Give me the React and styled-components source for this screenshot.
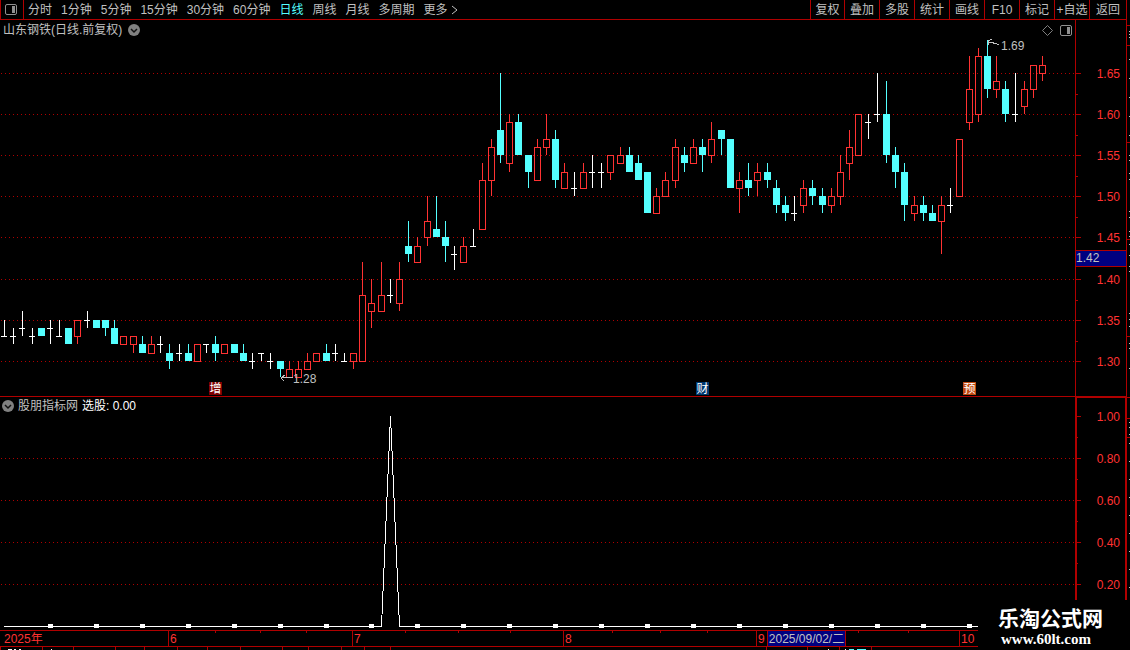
import { useState } from "react";
import styled, { createGlobalStyle } from "styled-components";

const GlobalStyle = createGlobalStyle`
  :root {
    --line: #b00000;
    --red: #ff3232;
    --cyan: #54ffff;
    --grey: #c0c0c0;
    --navy: #000080;
  }

  * {
    box-sizing: border-box;
  }

  body {
    margin: 0;
    background-color: #000;
    color: var(--grey);
    font-family: "Liberation Sans", "Noto Sans CJK SC", sans-serif;
    font-size: 12px;
    line-height: 16px;
  }

  button {
    padding: 0;
    border: none;
    background: none;
    color: inherit;
    font: inherit;
    cursor: pointer;
  }

  svg {
    display: block;
  }
`;

const Page = styled.div`
  position: relative;
  display: grid;
  grid-template-columns: minmax(0, 1fr) 3px;
  overflow: hidden;
`;

const Terminal = styled.main`
  border-right: 1px solid var(--line);
`;

const Toolbar = styled.nav`
  display: flex;
  justify-content: space-between;
  height: 20px;
  border-bottom: 1px solid var(--line);
  white-space: nowrap;
`;

const Periods = styled.div`
  display: flex;
  align-items: center;
  gap: 9px;
`;

const LayoutButton = styled.button`
  display: flex;
  align-items: center;
  width: 24px;
  height: 19px;
  margin-right: -5px;
  padding-left: 4px;
  border-left: 1px solid var(--line);
  border-right: 1px solid var(--line);
`;

const PeriodButton = styled.button`
  display: flex;
  align-items: center;
  gap: 3px;
  color: ${(props) => (props.$active ? "var(--cyan)" : "var(--grey)")};
`;

const Tools = styled.div`
  display: flex;
`;

const ToolButton = styled.button`
  width: 35px;
  border-left: 1px solid var(--line);

  &:first-child {
    width: 34px;
  }

  &:last-child {
    width: 37px;
  }
`;

const Panel = styled.section`
  display: flex;
`;

const PricePanel = styled(Panel)`
  border-bottom: 1px solid var(--line);
`;

const PlotColumn = styled.div`
  flex: 1;
  min-width: 0;
`;

const TitleBar = styled.header`
  display: flex;
  align-items: center;
  gap: 6px;
  height: 20px;
  padding: 0 3px;
  white-space: nowrap;
`;

const IndicatorTitleBar = styled(TitleBar)`
  gap: 4px;
  height: 19px;
  padding: 0 2px 2px;
`;

const Title = styled.h1`
  margin: 0;
  font-size: 12px;
  font-weight: 400;
`;

const Reading = styled.span`
  color: #fff;
`;

const TitleActions = styled.div`
  display: flex;
  align-items: center;
  gap: 7px;
  margin-left: auto;
`;

const PlotArea = styled.div`
  position: relative;
`;

const Plot = styled.svg`
  width: 100%;
  height: ${(props) => props.$height};
  overflow: visible;
`;

const PriceTag = styled.span`
  position: absolute;
  line-height: 12px;
`;

const EventBadge = styled.button`
  position: absolute;
  bottom: 1px;
  width: 13px;
  height: 13px;
  margin-left: -6px;
  background-color: ${(props) => props.$color};
  color: #fff;
  line-height: 14px;
`;

const PriceAxis = styled.div`
  width: 51px;
  border-left: 1px solid var(--line);
`;

const IndicatorAxis = styled.div`
  width: 51px;
  border: solid var(--line);
  border-width: 1px 1px 0 2px;
`;

const Calendar = styled.div`
  position: relative;
  display: grid;
  grid-template-columns: 168fr 184fr 211fr 193fr 203fr 167fr;
  height: 17px;
  border-top: 1px solid var(--line);
  border-bottom: 1px solid var(--line);
  color: var(--red);
  line-height: 17px;
`;

const Month = styled.div`
  height: 15px;
  padding-left: 1px;
  border-left: 1px solid var(--line);
  background: linear-gradient(var(--line) 0 0) 25% 0 / 1px 2px no-repeat,
    linear-gradient(var(--line) 0 0) 50% 0 / 1px 2px no-repeat,
    linear-gradient(var(--line) 0 0) 75% 0 / 1px 2px no-repeat;

  &:first-child {
    padding-left: 4px;
    border-left: none;
    background: none;
  }
`;

const CursorDate = styled.div`
  position: absolute;
  top: 0;
  left: 68.1%;
  height: 15px;
  padding: 0 1px;
  border-left: 1px solid var(--line);
  border-right: 1px solid var(--line);
  background-color: var(--navy);
  color: var(--grey);
`;

const Watermark = styled.a`
  position: absolute;
  right: 0;
  bottom: 0;
  width: 152px;
  height: 50px;
  padding: 8px 0 0 20px;
  background-color: #000;
  color: #fff;
  font-weight: 700;
  text-decoration: none;
`;

const SiteName = styled.div`
  font-size: 21px;
  line-height: 22px;
`;

const SiteUrl = styled.div`
  padding-left: 3px;
  font-family: "Liberation Serif", serif;
  font-size: 15px;
  line-height: 18px;
`;

const periods = [
  "分时",
  "1分钟",
  "5分钟",
  "15分钟",
  "30分钟",
  "60分钟",
  "日线",
  "周线",
  "月线",
  "多周期",
];

const tools = [
  "复权",
  "叠加",
  "多股",
  "统计",
  "画线",
  "F10",
  "标记",
  "+自选",
  "返回",
];

const months = ["2025年", "6", "7", "8", "9", "10"];

// open, close, high, low in cents
const candles = [
  [133, 133, 135, 133], [133, 133, 134, 132], [134, 134, 136, 133],
  [133, 133, 134, 132], [134, 133, 134, 133], [134, 134, 135, 132],
  [133, 133, 135, 133], [134, 132, 134, 132], [133, 135, 135, 132],
  [135, 135, 136, 134], [135, 134, 135, 134], [135, 134, 135, 133],
  [134, 132, 135, 132], [132, 133, 133, 132], [132, 133, 133, 131],
  [132, 131, 133, 131], [131, 132, 133, 131], [132, 132, 133, 131],
  [131, 130, 132, 129], [131, 131, 132, 130], [131, 130, 132, 130],
  [130, 132, 132, 130], [132, 132, 132, 131], [132, 131, 133, 130],
  [131, 132, 132, 131], [132, 131, 132, 131], [131, 130, 132, 130],
  [130, 130, 131, 129], [131, 131, 131, 130], [130, 130, 131, 129],
  [130, 129, 130, 128], [128, 129, 130, 128], [128, 129, 130, 128],
  [129, 130, 131, 129], [130, 131, 131, 130], [131, 130, 132, 130],
  [131, 131, 132, 130], [130, 130, 131, 130], [130, 131, 131, 129],
  [130, 138, 142, 130], [136, 137, 140, 134], [136, 138, 142, 136],
  [138, 138, 140, 137], [137, 140, 142, 136], [144, 143, 147, 142],
  [142, 144, 145, 142], [145, 147, 150, 144], [146, 145, 150, 145],
  [145, 144, 147, 142], [143, 143, 144, 141], [142, 144, 145, 142],
  [144, 144, 146, 144], [146, 152, 154, 146], [152, 156, 157, 150],
  [158, 155, 165, 154], [154, 159, 160, 153], [159, 155, 160, 155],
  [155, 153, 155, 151], [152, 156, 157, 152], [156, 157, 160, 155],
  [157, 152, 158, 151], [151, 153, 154, 151], [151, 151, 153, 150],
  [151, 153, 154, 151], [153, 153, 155, 151], [153, 153, 154, 151],
  [153, 155, 155, 152], [154, 155, 156, 154], [155, 153, 156, 153],
  [154, 152, 155, 152], [153, 148, 153, 148], [148, 150, 151, 148],
  [150, 152, 153, 150], [152, 156, 157, 151], [155, 154, 156, 153],
  [154, 156, 157, 154], [156, 155, 157, 153], [155, 157, 159, 154],
  [158, 157, 158, 155], [157, 151, 157, 151], [151, 152, 153, 148],
  [152, 151, 154, 150], [152, 153, 154, 150], [153, 152, 154, 151],
  [151, 149, 152, 148], [149, 148, 150, 147], [148, 148, 150, 147],
  [149, 151, 152, 148], [151, 150, 152, 149], [150, 149, 151, 148],
  [149, 150, 151, 148], [150, 153, 155, 149], [154, 156, 158, 152],
  [155, 160, 160, 155], [159, 159, 160, 157], [160, 160, 165, 159],
  [160, 155, 164, 154], [155, 153, 156, 151], [153, 149, 154, 147],
  [148, 149, 150, 147], [149, 148, 150, 147], [148, 147, 149, 147],
  [147, 149, 150, 143], [149, 149, 151, 148], [150, 157, 157, 150],
  [159, 163, 167, 158], [160, 167, 168, 159], [167, 163, 169, 162],
  [163, 164, 167, 162], [163, 160, 164, 159], [160, 160, 165, 159],
  [161, 163, 164, 160], [163, 166, 166, 162], [165, 166, 167, 164],
];

const PLOT_WIDTH = 1075;
const xOf = (index) => Math.round(4 + index * 9.187);
const yOf = (price) => Math.round(32.92 + (165 - price) * 8.224);
const leftOf = (x) => `${(x / PLOT_WIDTH) * 100}%`;

const priceLevels = [165, 160, 155, 150, 145, 140, 135, 130];
const indicatorLevels = [1, 0.8, 0.6, 0.4, 0.2];

const events = [
  { index: 23, label: "增", color: "#800000" },
  { index: 76, label: "财", color: "#003870" },
  { index: 105, label: "预", color: "#c04810" },
];

const rulerRed = [25, 45, 142, 239, 336, 397, 418, 437];
const rulerGrey = [
  31, 34, 37, 59, 78, 97, 116, 135, 155, 160, 173, 179, 211, 217, 231, 236,
  244, 255, 266, 271, 313, 319, 326, 343, 348, 368, 422, 427, 434, 443, 461,
  479, 497, 515, 533, 551, 569, 587,
];
const tabEdges = [
  0, 42, 73, 115, 144, 177, 207, 240, 282, 308, 341, 364, 390, 766, 807, 839,
  871,
];

function PanelIcon() {
  return (
    <svg width="12" height="11" viewBox="0 0 12 11" aria-hidden="true">
      <rect
        x="0.5"
        y="0.5"
        width="11"
        height="10"
        rx="1.5"
        fill="none"
        stroke="#909090"
      />
      <rect x="7" y="2" width="3" height="7" fill="#909090" />
    </svg>
  );
}

function CollapseIcon() {
  return (
    <svg width="12" height="12" viewBox="0 0 12 12" aria-hidden="true">
      <circle cx="6" cy="6" r="6" fill="#808080" />
      <path d="M3 5L6 8L9 5" fill="none" stroke="#101010" strokeWidth="1.5" />
    </svg>
  );
}

function GridLine({ y }) {
  return (
    <path
      d={`M1 ${y + 0.5}H${PLOT_WIDTH}`}
      stroke="var(--line)"
      strokeDasharray="1 3"
    />
  );
}

function Candle({ index, data }) {
  const [open, close, high, low] = data;
  const x = xOf(index);
  const top = yOf(Math.max(open, close));
  const bottom = yOf(Math.min(open, close));
  const highY = yOf(high);
  const lowY = yOf(low);

  if (open === close) {
    return (
      <g fill="#fff">
        <rect x={x} y={highY} width="1" height={lowY - highY} />
        <rect x={x - 3} y={top} width="6" height="1" />
      </g>
    );
  }

  if (close < open) {
    return (
      <g fill="var(--cyan)">
        <rect x={x} y={highY} width="1" height={lowY - highY} />
        <rect x={x - 3} y={top} width="7" height={bottom - top} />
      </g>
    );
  }

  return (
    <g fill="var(--red)">
      <rect x={x} y={highY} width="1" height={top - highY} />
      <rect x={x} y={bottom} width="1" height={lowY - bottom} />
      <rect
        x={x - 2.5}
        y={top + 0.5}
        width="6"
        height={bottom - top}
        fill="none"
        stroke="var(--red)"
      />
    </g>
  );
}

function PriceChart() {
  return (
    <PlotArea>
      <Plot
        $height="356px"
        viewBox={`0 0 ${PLOT_WIDTH} 356`}
        preserveAspectRatio="none"
        shapeRendering="crispEdges"
        role="img"
        aria-label="日线"
      >
        {priceLevels.map((price) => (
          <GridLine key={price} y={yOf(price)} />
        ))}
        {candles.map((data, index) => (
          <Candle key={index} index={index} data={data} />
        ))}
        <g fill="none" stroke="var(--grey)">
          <path d="M988.5 5V0.5L992 -0.5M988 2.5H992L995 3.5L999 4.5" />
          <path d="M281 337.5H293M281 337.5L285 335M281 337.5L284 341" />
        </g>
      </Plot>
      <PriceTag style={{ left: leftOf(1001), top: 0 }}>1.69</PriceTag>
      <PriceTag style={{ left: leftOf(293), bottom: 11 }}>1.28</PriceTag>
      {events.map((event) => (
        <EventBadge
          key={event.label}
          $color={event.color}
          style={{ left: leftOf(xOf(event.index)) }}
        >
          {event.label}
        </EventBadge>
      ))}
    </PlotArea>
  );
}

function PriceScale() {
  return (
    <PriceAxis>
      <svg width="50" height="376" fontSize="12" fill="var(--red)">
        {priceLevels.map((price) => {
          const y = yOf(price) + 20;
          return (
            <g key={price}>
              <rect y={y} width="5" height="1" fill="var(--line)" />
              {price !== 145 && price !== 130 && (
                <rect y={y + 21} width="2" height="1" fill="var(--line)" />
              )}
              <text x="44" y={y + 5} textAnchor="end">
                {(price / 100).toFixed(2)}
              </text>
            </g>
          );
        })}
        <rect y="230" width="50" height="17" fill="var(--line)" />
        <rect y="231" width="50" height="15" fill="var(--navy)" />
        <text x="0" y="242" fill="var(--grey)">
          1.42
        </text>
      </svg>
    </PriceAxis>
  );
}

function IndicatorChart() {
  return (
    <Plot
      $height="214px"
      viewBox={`0 0 ${PLOT_WIDTH} 214`}
      preserveAspectRatio="none"
      shapeRendering="crispEdges"
      role="img"
      aria-label="选股"
    >
      {indicatorLevels.slice(1).map((level) => (
        <GridLine key={level} y={Math.round((1 - level) * 210)} />
      ))}
      <path
        d="M4 210.5H381.5L390.5 0L399.5 210.5H1042"
        fill="none"
        stroke="#fff"
      />
      {candles.map(
        (_, index) =>
          index > 0 &&
          index % 5 === 0 && (
            <rect
              key={index}
              x={xOf(index) - 2}
              y="208"
              width="5"
              height="4"
              fill="#fff"
            />
          )
      )}
    </Plot>
  );
}

function IndicatorScale() {
  return (
    <IndicatorAxis>
      <svg width="48" height="232" fontSize="12" fill="var(--red)">
        {indicatorLevels.map((level) => {
          const y = 18 + Math.round((1 - level) * 210);
          return (
            <g key={level}>
              <rect y={y} width="4" height="1" fill="var(--line)" />
              <rect y={y + 21} width="1" height="1" fill="var(--line)" />
              <text x="43" y={y + 5} textAnchor="end">
                {level.toFixed(2)}
              </text>
            </g>
          );
        })}
      </svg>
    </IndicatorAxis>
  );
}

function App() {
  const [period, setPeriod] = useState("日线");

  return (
    <>
      <GlobalStyle />
      <Page>
        <Terminal>
          <Toolbar>
            <Periods>
              <LayoutButton aria-label="布局">
                <PanelIcon />
              </LayoutButton>
              {periods.map((name) => (
                <PeriodButton
                  key={name}
                  $active={name === period}
                  onClick={() => setPeriod(name)}
                >
                  {name}
                </PeriodButton>
              ))}
              <PeriodButton>
                更多
                <svg width="7" height="10" viewBox="0 0 7 10">
                  <path d="M1 1L6 5L1 9" fill="none" stroke="var(--grey)" />
                </svg>
              </PeriodButton>
            </Periods>
            <Tools>
              {tools.map((name) => (
                <ToolButton key={name}>{name}</ToolButton>
              ))}
            </Tools>
          </Toolbar>

          <PricePanel>
            <PlotColumn>
              <TitleBar>
                <Title>山东钢铁(日线.前复权)</Title>
                <button aria-label="展开">
                  <CollapseIcon />
                </button>
                <TitleActions>
                  <svg width="11" height="11" viewBox="0 0 11 11">
                    <path
                      d="M5.5 0.5L10.5 5.5L5.5 10.5L0.5 5.5Z"
                      fill="none"
                      stroke="#808080"
                    />
                  </svg>
                  <PanelIcon />
                </TitleActions>
              </TitleBar>
              <PriceChart />
            </PlotColumn>
            <PriceScale />
          </PricePanel>

          <Panel>
            <PlotColumn>
              <IndicatorTitleBar>
                <button aria-label="展开">
                  <CollapseIcon />
                </button>
                <span>股朋指标网</span>
                <Reading>选股: 0.00</Reading>
              </IndicatorTitleBar>
              <IndicatorChart />
            </PlotColumn>
            <IndicatorScale />
          </Panel>

          <Calendar>
            {months.map((month) => (
              <Month key={month}>{month}</Month>
            ))}
            <CursorDate>2025/09/02/二</CursorDate>
          </Calendar>

          <Plot
            $height="3px"
            viewBox="0 0 1126 3"
            preserveAspectRatio="none"
            shapeRendering="crispEdges"
            aria-hidden="true"
          >
            {tabEdges.map((x) => (
              <rect key={x} x={x} width="1" height="3" fill="var(--line)" />
            ))}
            <path
              d="M8 2.5H12M14 2.5H16M19 2.5H21M51 2.5H52M828 2.5H829M845 2.5H846"
              stroke="#fff"
            />
            <path d="M849 2.5H854M857 2.5H866" stroke="var(--cyan)" />
          </Plot>
        </Terminal>

        <svg width="3" height="650" shapeRendering="crispEdges">
          {rulerRed.map((y) => (
            <rect key={y} y={y} width="3" height="1" fill="var(--line)" />
          ))}
          {rulerGrey.map((y) => (
            <rect key={y} x="2" y={y} width="1" height="1" fill="#c0c0c0" />
          ))}
        </svg>

        <Watermark href="#">
          <SiteName>乐淘公式网</SiteName>
          <SiteUrl>www.60lt.com</SiteUrl>
        </Watermark>
      </Page>
    </>
  );
}

export default App;
